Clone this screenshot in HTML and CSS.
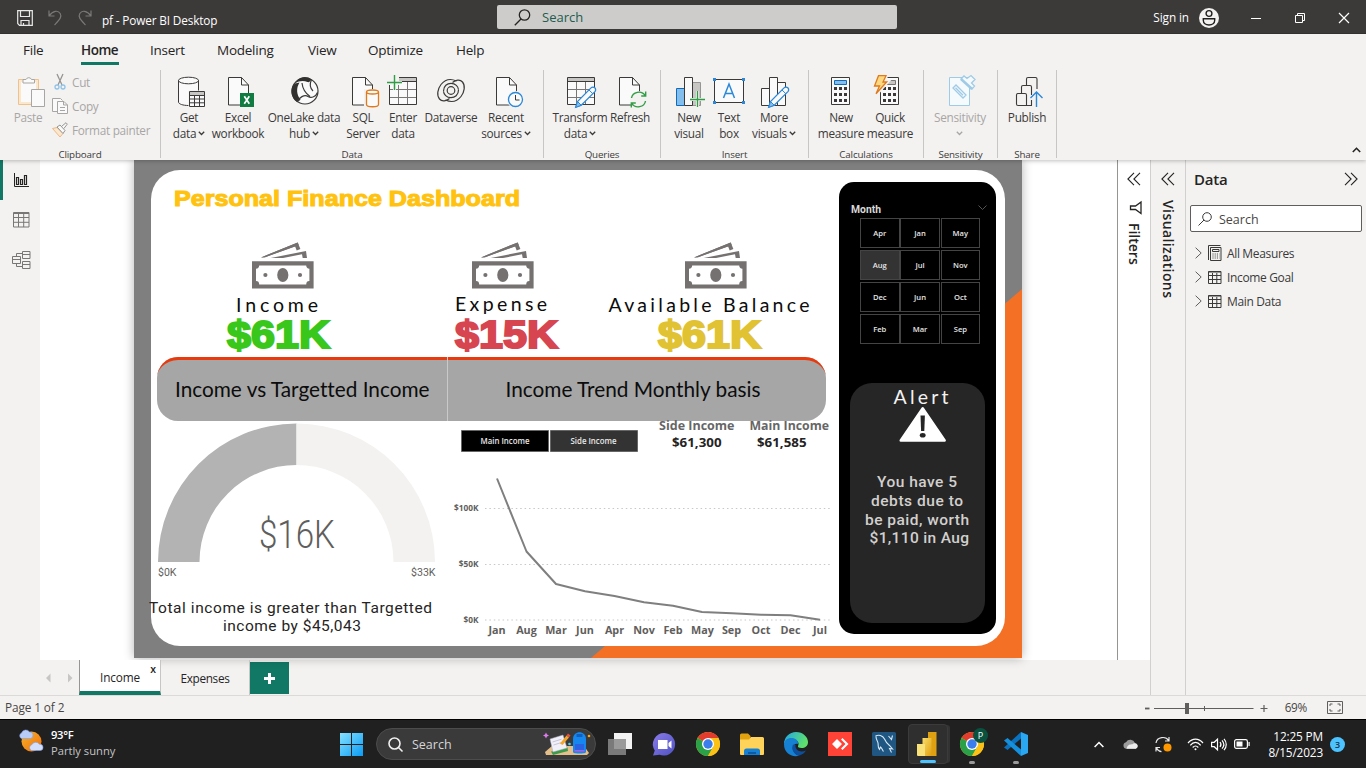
FILE: index.html
```html
<!DOCTYPE html>
<html lang="en">
<head>
<meta charset="utf-8">
<title>pf - Power BI Desktop</title>
<link rel="stylesheet" href="styles.css">
</head>
<body>
<svg class="defs" width="0" height="0" aria-hidden="true">
  <defs>
    <symbol id="page" viewBox="0 0 22 29" overflow="visible"><path d="M.5.5h13l7 7.500v20h-20z" fill="#fafafa" stroke="#3b3a39"/><path d="M13.500.5v7.500h7" fill="none" stroke="#3b3a39"/></symbol>
    <symbol id="calc" viewBox="0 0 19 29" overflow="visible"><path d="M.5.500h18v27h-18z" fill="#fafafa" stroke="#3b3a39"/><path d="M3 10h3v3H3zM8 10h3v3H8zM13 10h3v3h-3zM3 16h3v3H3zM8 16h3v3H8zM13 16h3v3h-3zM3 22h3v3H3zM8 22h3v3H8zM13 22h3v3h-3z" fill="#3b3a39"/></symbol>
    <symbol id="grid" viewBox="0 0 29 29" overflow="visible"><path d="M.5.500h27v27h-27z" fill="#fafafa"/><path d="M.5.5h27v4h-27z" fill="#c8c6c4"/><path d="M1 12.500h27M1 20.500h27M9.500 5v23M18.500 5v23" stroke="#797775" fill="none"/><path d="M.5.5h27v27h-27zM.5 4.500h27" stroke="#3b3a39" fill="none"/></symbol>
    <symbol id="pencil" viewBox="0 0 22 22" overflow="visible"><path d="M.7 21.300 2.500 15.500 16 1.900a2.600 2.600 0 0 1 3.900 3.700L6.300 19.300z" fill="#fafafa" stroke="#2b88d8" stroke-width="1.300"/><path d="M.7 21.300l1.800-5.800 3.800 3.800z" fill="#83beec" stroke="#2b88d8"/><path d="M14 4l3.800 3.700" stroke="#2b88d8"/></symbol>
    <symbol id="tbl" viewBox="0 0 14 13" overflow="visible"><path d="M.5.500h12.500v12H.5z" fill="none" stroke="#3b3a39"/><path d="M.5 1h12.500M.5 4.500h12.500M.5 8.500h12.500M4.500 2v10.500M8.800 2v10.500" stroke="#3b3a39"/></symbol>
    <symbol id="bill" viewBox="0 0 62 47" overflow="visible"><g fill="#767171"><path d="M9 15.400 45.700.4l2.700 6.600-3.700 1.400-1.600-4-30 10.800z"/><path d="M9 15.400 45.700.4l1 2.500L13 15.200z"/><path d="M18.700 16 54 9l1 7h-4.300l-.7-3.700L31 16z"/><path fill-rule="evenodd" d="M0 19.300h61.600v27.300H0zM7.200 23.500a3.300 3.300 0 0 1-3.200 3.200v12.400a3.300 3.300 0 0 1 3.200 3.300h47a3.300 3.300 0 0 1 3.200-3.300V26.700a3.300 3.300 0 0 1-3.200-3.200z"/><ellipse cx="30.800" cy="33" rx="5.600" ry="7"/><circle cx="13.400" cy="33" r="2.100"/><circle cx="48" cy="33" r="2.100"/></g></symbol>
    <symbol id="chrome" viewBox="0 0 24 24" overflow="visible"><circle cx="12" cy="12" r="12" fill="#fbc116"/><path d="M12 12 1.600 6A12 12 0 0 1 22.400 6z" fill="#e33b2e"/><path d="M12 12 1.600 6A12 12 0 0 0 12 24l5.200-9z" fill="#2aa148"/><path d="M12 6h10.400A12 12 0 0 1 12 24l5.200-9z" fill="#fbc116"/><circle cx="12" cy="12" r="6" fill="#fff"/><circle cx="12" cy="12" r="4.700" fill="#3b7ded"/></symbol>
    <symbol id="chev" viewBox="0 0 7 5" overflow="visible"><path d="M.8.8 3.500 3.500 6.200.8" fill="none" stroke="currentColor" stroke-width="1.300"/></symbol>
    <linearGradient id="gWin" x1="0" y1="0" x2="1" y2="1"><stop offset="0" stop-color="#86e2fd"/><stop offset="1" stop-color="#0a9bf5"/></linearGradient>
    <linearGradient id="gSun" x1="0" y1="0" x2="1" y2="1"><stop offset="0" stop-color="#f6b42a"/><stop offset="1" stop-color="#f06d0c"/></linearGradient>
    <linearGradient id="gEdge" x1="0" y1="0" x2="1" y2=".4"><stop offset="0" stop-color="#1fa6e8"/><stop offset="1" stop-color="#5fe06c"/></linearGradient>
    <linearGradient id="gChat" x1="0" y1="0" x2="1" y2="1"><stop offset="0" stop-color="#8a7be8"/><stop offset="1" stop-color="#4f52c4"/></linearGradient>
    <linearGradient id="gGold" x1="0" y1="0" x2="1" y2="1"><stop offset="0" stop-color="#f9dd6b"/><stop offset="1" stop-color="#e0a10f"/></linearGradient>
  </defs>
</svg>

<div class="app">
  <header class="titlebar">
    <div class="quick">
      <svg width="16" height="16" viewBox="0 0 16 16" fill="none" stroke="#e8e8e8" stroke-width="1.200"><path d="M.7.700h14.600v14.600H2.500L.7 13.500z"/><path d="M3.500 1v5.500h9V1M4 15v-4.500h8V15M6.500 15v-2"/></svg>
      <svg width="14" height="16" viewBox="0 0 14 16" fill="none" stroke="#7a7978" stroke-width="1.200"><path d="M1 .5v5.500h5.500M1.300 5.700C5 .5 10 0 12.200 3.500c2 3.500-.7 6-5.700 11.500"/></svg>
      <svg width="14" height="16" viewBox="0 0 14 16" fill="none" stroke="#7a7978" stroke-width="1.200"><path d="M13 .5v5.500H7.500M12.700 5.700C9 .5 4 0 1.800 3.500c-2 3.500.7 6 5.700 11.500"/></svg>
      <span class="doc">pf - Power BI Desktop</span>
    </div>
    <div class="topsearch">
      <svg width="17" height="17" viewBox="0 0 17 17" fill="none" stroke="#252423" stroke-width="1.300"><circle cx="10.500" cy="6" r="5.200"/><path d="M7 10 .8 16.200"/></svg>
      <span>Search</span>
    </div>
    <div class="account">
      <span>Sign in</span>
      <svg class="avatar" width="20" height="20" viewBox="0 0 20 20"><circle cx="10" cy="10" r="10" fill="#f3f2f1"/><g fill="none" stroke="#201f1e" stroke-width="1.400"><circle cx="10" cy="5.500" r="2.900"/><path d="M4.300 10.700h11.400v1.500c0 3-2.500 4.800-5.700 4.800s-5.700-1.800-5.700-4.800z"/></g></svg>
      <svg width="10" height="10" viewBox="0 0 10 10" stroke="#fff"><path d="M0 5.500h10"/></svg>
      <svg width="10" height="10" viewBox="0 0 10 10" fill="none" stroke="#fff"><path d="M.5 2.500h7v7h-7zM2.500 2.500v-2h7v7h-2"/></svg>
      <svg width="10" height="10" viewBox="0 0 10 10" stroke="#fff" stroke-width="1.200"><path d="M0 0l10 10M10 0 0 10"/></svg>
    </div>
  </header>

  <nav class="menu">
    <span class="m-file">File</span><span class="m-home">Home</span><span class="m-insert">Insert</span><span class="m-model">Modeling</span><span class="m-view">View</span><span class="m-opt">Optimize</span><span class="m-help">Help</span>
  </nav>

  <section class="ribbon">
    <div class="group g-clip">
      <div class="tools">
        <div class="btn off b56">
          <svg width="40" height="33" viewBox="0 0 40 33"><path d="M9.500 4.500h20v25h-20z" fill="#fbe7cb" stroke="#ecc38c"/><path d="M12 7h15v20H12z" fill="#fafafa"/><path d="M14 8V4.500h3a3 3 0 0 1 5.500 0h3V8z" fill="#fafafa" stroke="#a8a6a4"/><path d="M22.500 14.500h13v17h-13z" fill="#fafafa" stroke="#a8a6a4"/></svg>
          <span>Paste</span>
        </div>
        <div class="stack">
          <div class="mini"><svg width="16" height="16" viewBox="0 0 16 16" fill="none"><path d="M5 0l5 11M11 0 6 11" stroke="#979593" stroke-width="1.300"/><circle cx="5" cy="13" r="2" stroke="#8fc3e8" stroke-width="1.300"/><circle cx="11" cy="13" r="2" stroke="#8fc3e8" stroke-width="1.300"/></svg><span>Cut</span></div>
          <div class="mini"><svg width="16" height="16" viewBox="0 0 16 16" fill="#fafafa" stroke="#a8a6a4"><path d="M5 13.500H.5V.5h8l2 2"/><path d="M5.500 3.500h6.500l3.500 3.500v8.500h-10zM8 9.500h5M8 12.500h5M11.500 3.500V7h4"/></svg><span>Copy</span></div>
          <div class="mini"><svg width="16" height="16" viewBox="0 0 16 16"><path d="M.5 6.500 5 5.500l6 6-3 3.500z" fill="#fbe7cb" stroke="#ecb98a"/><path d="M5 5l3-2 5 5.500-2 3zM9.500 4.500 14 .700l1.300 1.400-3.500 4.500" fill="#fafafa" stroke="#979593"/></svg><span>Format painter</span></div>
        </div>
      </div>
      <div class="cap">Clipboard</div>
    </div>

    <div class="group g-data">
      <div class="tools">
        <div class="btn b44">
          <svg width="40" height="33" viewBox="0 0 40 33"><path d="M9.500 5v22c0 2 4.500 3.500 10 3.500s10-1.500 10-3.500V5" fill="#fafafa" stroke="#3b3a39"/><ellipse cx="19.500" cy="5.500" rx="10" ry="3.300" fill="#fafafa" stroke="#3b3a39"/><path d="M19.500 15.500h17v17h-17z" fill="#f3f2f1"/><path d="M20.500 16.500h15v15h-15z" fill="#fafafa" stroke="#3b3a39"/><path d="M21 17h14v3H21z" fill="#c8c6c4"/><path d="M20.500 20.500h15M20.500 24h15M20.500 27.800h15M25.500 20.500v11M30.500 20.500v11" stroke="#3b3a39" fill="none"/></svg>
          <span>Get<br>data<svg class="chev" width="7" height="5"><use href="#chev"/></svg></span>
        </div>
        <div class="btn b54">
          <svg width="40" height="33" viewBox="0 0 40 33"><use href="#page" x="10" y="2" width="22" height="29"/><path d="M22 18h14v14H22z" fill="#107c41"/><path d="M26.300 21.200l5 7.600M31.300 21.200l-5 7.600" stroke="#fff" stroke-width="1.700"/></svg>
          <span>Excel<br>workbook</span>
        </div>
        <div class="btn b78">
          <svg width="40" height="33" viewBox="0 0 40 33"><circle cx="21" cy="16" r="13" fill="#fafafa" stroke="#3b3a39" stroke-width="1.200"/><path d="M13 5.500C16 1.300 24 .7 27.500 4.500c-2 2.200-2 3-4 2.500-4-1.500-8.500-1.200-12.500 1.500z" fill="#323130"/><path d="M11 8.500C5.500 12 6.500 23 13 27c1.500-1 3-1.500 3.500-2.500C12.500 20 12 13 15.500 7.500z" fill="#323130"/><path d="M13 27c2-4.500 7.500-8 11-5.500 3.500 2 8 0 9.500-4M18 8c.5 5 3 10 8 13.500M27.500 4.500C25.500 9 26 13 29 16" fill="none" stroke="#3b3a39" stroke-width="1.200"/></svg>
          <span>OneLake data<br>hub<svg class="chev" width="7" height="5"><use href="#chev"/></svg></span>
        </div>
        <div class="btn b40">
          <svg width="40" height="33" viewBox="0 0 40 33"><use href="#page" x="9" y="2" width="22" height="29"/><path d="M21 14h17v19H21z" fill="#f3f2f1"/><path d="M23.500 17v12.500c0 3 12 3 12 0V17" fill="#fafafa" stroke="#e07a1c" stroke-width="1.300"/><ellipse cx="29.500" cy="17" rx="6" ry="2" fill="#fafafa" stroke="#e07a1c" stroke-width="1.300"/></svg>
          <span>SQL<br>Server</span>
        </div>
        <div class="btn b40">
          <svg width="40" height="33" viewBox="0 0 40 33"><use href="#grid" x="6" y="2" width="29" height="29"/><path d="M3 0h13v10H3z" fill="#f3f2f1"/><path d="M11.500 0v15M4 7.500h15" stroke="#f3f2f1" stroke-width="3"/><path d="M11.500 0v15M4 7.500h15" stroke="#2f9e44" stroke-width="1.400"/></svg>
          <span>Enter<br>data</span>
        </div>
        <div class="btn b56">
          <svg width="40" height="33" viewBox="0 0 40 33" fill="none" stroke="#3b3a39" stroke-width="1.200"><g id="lobe"><path d="M25.500 6C20 3.500 14 4.500 10 9.500c-3.500 4.500-4.500 11-1.500 14.500 2.500 3 7 2 10-.5"/><path d="M12.500 16c0-5 3.700-7.700 7.500-7.700 4.500 0 7.300 3.200 7.500 6.500"/></g><g transform="rotate(180 20 15.500)"><path d="M25.500 6C20 3.500 14 4.500 10 9.500c-3.500 4.500-4.500 11-1.500 14.500 2.500 3 7 2 10-.5"/><path d="M12.500 16c0-5 3.700-7.700 7.500-7.700 4.500 0 7.300 3.200 7.500 6.500"/></g><circle cx="20" cy="15.500" r="3.800"/></svg>
          <span>Dataverse</span>
        </div>
        <div class="btn b54">
          <svg width="40" height="33" viewBox="0 0 40 33"><use href="#page" x="10" y="2" width="22" height="29"/><circle cx="29.500" cy="24.500" r="8.500" fill="#f3f2f1"/><circle cx="29.500" cy="24.500" r="7" fill="#fafafa" stroke="#2b88d8" stroke-width="1.300"/><path d="M29.500 20v5h4" fill="none" stroke="#3b3a39"/></svg>
          <span>Recent<br>sources<svg class="chev" width="7" height="5"><use href="#chev"/></svg></span>
        </div>
      </div>
      <div class="cap">Data</div>
    </div>

    <div class="group g-query">
      <div class="tools">
        <div class="btn b54">
          <svg width="40" height="33" viewBox="0 0 40 33"><use href="#grid" x="7" y="2" width="29" height="29"/><use href="#pencil" x="15" y="11" width="22" height="22"/></svg>
          <span>Transform<br>data<svg class="chev" width="7" height="5"><use href="#chev"/></svg></span>
        </div>
        <div class="btn b46">
          <svg width="40" height="33" viewBox="0 0 40 33"><use href="#page" x="9" y="2" width="22" height="29"/><circle cx="28.500" cy="24.500" r="8.500" fill="#f3f2f1"/><path d="M21.500 23c1-6 10-8.500 14-2M35.500 26c-1 6-10 8.500-14 2M35.700 16.500V21h-4.500M21.300 32.500V28h4.500" fill="none" stroke="#2f9e44" stroke-width="1.400"/></svg>
          <span>Refresh</span>
        </div>
      </div>
      <div class="cap">Queries</div>
    </div>

    <div class="group g-insert">
      <div class="tools">
        <div class="btn b40">
          <svg width="40" height="33" viewBox="0 0 40 33"><path d="M7.500 13.500h8v17h-8z" fill="#83beec" stroke="#0f6cbd"/><path d="M23.500 7.500h8v23h-8z" fill="#c8c6c4" stroke="#979593"/><path d="M15.500 2.500h8v28h-8z" fill="#fafafa" stroke="#3b3a39"/><path d="M28.500 16v16M21 24.500h15" stroke="#f3f2f1" stroke-width="3"/><path d="M28.500 16v16M21 24.500h15" stroke="#2f9e44" stroke-width="1.300"/></svg>
          <span>New<br>visual</span>
        </div>
        <div class="btn b40">
          <svg width="40" height="33" viewBox="0 0 40 33"><path d="M5.500 4.500h29v23h-29z" fill="#fafafa" stroke="#3b3a39"/><path d="M4 3h3v3H4zM33 3h3v3h-3zM4 26h3v3H4zM33 26h3v3h-3z" fill="#2b88d8"/><path d="M14.500 23l5.500-14 5.500 14M16.300 18.500h7.400" fill="none" stroke="#2b88d8" stroke-width="1.500"/></svg>
          <span>Text<br>box</span>
        </div>
        <div class="btn b50">
          <svg width="40" height="33" viewBox="0 0 40 33"><path d="M7.500 13.500h8v17h-8zM23.500 7.500h8v23h-8zM15.500 2.500h8v28h-8z" fill="#fafafa" stroke="#3b3a39"/><use href="#pencil" x="14" y="11" width="22" height="22"/></svg>
          <span>More<br>visuals<svg class="chev" width="7" height="5"><use href="#chev"/></svg></span>
        </div>
      </div>
      <div class="cap">Insert</div>
    </div>

    <div class="group g-calc">
      <div class="tools">
        <div class="btn b50">
          <svg width="40" height="33" viewBox="0 0 40 33"><use href="#calc" x="10" y="2" width="19" height="29"/><path d="M13.500 5.500h12v4h-12z" fill="#83beec" stroke="#0f6cbd"/></svg>
          <span>New<br>measure</span>
        </div>
        <div class="btn b48">
          <svg width="40" height="33" viewBox="0 0 40 33"><use href="#calc" x="10" y="2" width="19" height="29"/><path d="M13.500 5.500h12v4h-12z" fill="#c8c6c4" stroke="#797775"/><path d="M8 0h9l-3 6.500h4L5.500 20.500 9 11.500H3.500z" fill="#fbdc8b" stroke="#f3f2f1" stroke-width="3"/><path d="M8.500.700h7.500L13 7h3.700L6 18.800 9.500 11H4.500z" fill="#fbd982" stroke="#e07a1c" stroke-width="1.300"/></svg>
          <span>Quick<br>measure</span>
        </div>
      </div>
      <div class="cap">Calculations</div>
    </div>

    <div class="group g-sens">
      <div class="tools">
        <div class="btn off b72">
          <svg width="40" height="33" viewBox="0 0 40 33" stroke="#9fcbe6" fill="#f5fafd"><path d="M9.500 2.500h20v28h-20z"/><path d="M13 13l3-3 10 10-3 3zM15.500 12.700l7.500 7.500M21 4l3-3 3 2.500L31 .500l4 4-3.500 3.500 3 3-2.500 3z" stroke-width="1.300"/><path d="M21 4l11 10" stroke-width="2.500"/></svg>
          <span>Sensitivity<br><svg class="chev solo" width="7" height="5"><use href="#chev"/></svg></span>
        </div>
      </div>
      <div class="cap">Sensitivity</div>
    </div>

    <div class="group g-share">
      <div class="tools">
        <div class="btn b58">
          <svg width="40" height="33" viewBox="0 0 40 33" fill="none"><path d="M25 30.500H11a1.500 1.500 0 0 1-1.500-1.500V20a1.500 1.500 0 0 1 1.500-1.500h7a1.500 1.500 0 0 1 1.500 1.500v10.500M14.500 18v-6a1.500 1.500 0 0 1 1.500-1.500h7a1.500 1.500 0 0 1 1.500 1.500v8M24.500 25v5.500M19.500 10V4A1.500 1.500 0 0 1 21 2.500h7.500A1.500 1.500 0 0 1 30 4v10" stroke="#3b3a39" stroke-width="1.100"/><path d="M29.500 32V17M23.500 23l6-6 6 6" stroke="#2b88d8" stroke-width="1.400"/></svg>
          <span>Publish</span>
        </div>
      </div>
      <div class="cap">Share</div>
    </div>
    <svg class="collapse" width="9" height="6" viewBox="0 0 9 6"><path d="M.8 5 4.500 1.300 8.200 5" fill="none" stroke="#252423" stroke-width="1.600"/></svg>
  </section>

  <main class="work">
    <div class="left">
      <div class="stage">
        <aside class="rail">
          <div class="view on"><svg width="15" height="15" viewBox="0 0 15 15" fill="none" stroke="#252423"><path d="M.5 0v13.500H15" /><path d="M2.500 4.500h2v7h-2zM6.500 6.500h2v5h-2zM10.500 2.500h2v9h-2z" stroke-width="1.200"/></svg></div>
          <div class="view"><svg width="17" height="16" viewBox="0 0 17 16" fill="none" stroke="#797775"><path d="M.5.500h15.500v14.500H.5zM.5 1.500h15.500M.5 5.500h15.500M.5 10.300h15.500M5.500 1v14M10.700 1v14"/></svg></div>
          <div class="view"><svg width="19" height="18" viewBox="0 0 19 18" fill="none" stroke="#797775"><path d="M.5 5.500h8v7h-8zM10.500.5h7.500v7h-7.500zM10.500 10.500h7.500v7h-7.500zM.5 8.500h8M10.500 3.500h7.500M10.500 13.500h7.500M4.500 5.500v-3h6M4.500 12.500v3h6"/></svg></div>
        </aside>

        <div class="canvas">
          <div class="report">
            <div class="card">
              <div class="board">
                <svg class="title" width="688" height="70" viewBox="0 0 688 70"><text x="23" y="35.500" textLength="346" lengthAdjust="spacingAndGlyphs" class="black gold">Personal Finance Dashboard</text></svg>
                <div class="kpis">
                  <svg width="254" height="117" viewBox="0 0 254 117"><use href="#bill" x="101" y="2" width="62" height="47"/><text x="85" y="72" textLength="82" class="kname">Income</text><text x="76" y="108" textLength="103" lengthAdjust="spacingAndGlyphs" class="kval green">$61K</text></svg>
                  <svg width="192" height="117" viewBox="0 0 192 117"><use href="#bill" x="67" y="2" width="62" height="47"/><text x="50" y="71" textLength="92" class="kname">Expense</text><text x="50" y="108" textLength="103" lengthAdjust="spacingAndGlyphs" class="kval red">$15K</text></svg>
                  <svg width="226" height="117" viewBox="0 0 226 117"><use href="#bill" x="88" y="2" width="62" height="47"/><text x="11.500" y="72" textLength="201" class="kname">Available Balance</text><text x="61" y="108" textLength="103" lengthAdjust="spacingAndGlyphs" class="kval yellow">$61K</text></svg>
                </div>
                <div class="banner">
                  <svg class="bl" width="290" height="64" viewBox="0 0 290 64"><text x="18" y="39.500" textLength="254.500" lengthAdjust="spacingAndGlyphs">Income vs Targetted Income</text></svg>
                  <svg width="378" height="64" viewBox="0 0 378 64"><text x="57.500" y="39.500" textLength="255" lengthAdjust="spacingAndGlyphs">Income Trend Monthly basis</text></svg>
                </div>
                <div class="visuals">
                  <svg width="296" height="225" viewBox="151 421 296 225">
                    <path d="M158 562A138.500 138.500 0 0 1 296.500 423.500V465A97 97 0 0 0 199.500 562z" fill="#b3b3b3"/>
                    <path d="M296.500 423.500A138.500 138.500 0 0 1 435 562H393.500A97 97 0 0 0 296.500 465z" fill="#f3f2f1"/>
                    <text x="259" y="548" textLength="76" lengthAdjust="spacingAndGlyphs" class="din big">$16K</text>
                    <text x="158" y="576" textLength="18.500" lengthAdjust="spacingAndGlyphs" class="din tick">$0K</text>
                    <text x="411" y="576" textLength="24.500" lengthAdjust="spacingAndGlyphs" class="din tick">$33K</text>
                    <text x="149" y="613" textLength="283" class="din note">Total income is greater than Targetted</text>
                    <text x="223" y="631" textLength="138" class="din note">income by $45,043</text>
                  </svg>
                  <svg width="392" height="225" viewBox="447 421 392 225">
                    <path d="M461.500 430.500h87v21h-87z" fill="#000" stroke="#666"/><path d="M550.500 430.500h87v21h-87z" fill="#333" stroke="#666"/>
                    <g class="chip"><text x="480.500" y="444" textLength="49" lengthAdjust="spacingAndGlyphs">Main Income</text><text x="570.500" y="444" textLength="46" lengthAdjust="spacingAndGlyphs">Side Income</text></g>
                    <g class="sumname"><text x="659" y="430" textLength="75.500" lengthAdjust="spacingAndGlyphs">Side Income</text><text x="749.500" y="430" textLength="79.500" lengthAdjust="spacingAndGlyphs">Main Income</text></g>
                    <g class="sumval"><text x="672" y="447" textLength="49.500" lengthAdjust="spacingAndGlyphs">$61,300</text><text x="757" y="447" textLength="49.500" lengthAdjust="spacingAndGlyphs">$61,585</text></g>
                    <path d="M485 508.500h346M485 564.500h346M485 620h346" stroke="#c8c8c8" stroke-dasharray="1.500 2.900"/>
                    <g class="axis small"><text x="478.500" y="511.300">$100K</text><text x="478.500" y="567.300">$50K</text><text x="478.500" y="623.300">$0K</text></g>
                    <g class="axis"><text x="497" y="634">Jan</text><text x="526.500" y="634">Aug</text><text x="556" y="634">Mar</text><text x="585" y="634">Jun</text><text x="614.500" y="634">Apr</text><text x="644" y="634">Nov</text><text x="673" y="634">Feb</text><text x="702.500" y="634">May</text><text x="731.500" y="634">Sep</text><text x="761" y="634">Oct</text><text x="790.500" y="634">Dec</text><text x="820" y="634">Jul</text></g>
                    <path d="M497 478.500 526.500 551.500 556 584 585 591.300 614.500 596 644 602.300 673 605.800 702 612 732 613.200 761 614.800 790.500 615.300 820 619.700" fill="none" stroke="#7f7f7f" stroke-width="2" stroke-linejoin="round"/>
                  </svg>
                </div>
              </div>

              <div class="side">
                <div class="slicer-head"><svg width="156" height="36" viewBox="839 182 156 36"><text x="851" y="213" textLength="30" lengthAdjust="spacingAndGlyphs" class="month">Month</text><path d="M978.500 205.500l4 4 4-4" fill="none" stroke="#555"/></svg></div>
                <div class="months">
                  <span>Apr</span><span>Jan</span><span>May</span>
                  <span class="sel">Aug</span><span>Jul</span><span>Nov</span>
                  <span>Dec</span><span>Jun</span><span>Oct</span>
                  <span>Feb</span><span>Mar</span><span>Sep</span>
                </div>
                <div class="alert">
                  <svg width="135" height="240" viewBox="850 383 135 240">
                    <text x="893.500" y="403.500" textLength="55" class="ahead">Alert</text>
                    <path d="M922.700 408.200l22 32.300h-44z" fill="#fff" stroke="#fff" stroke-width="2.400" stroke-linejoin="round"/>
                    <path d="M920.500 415.500h4.400l-.6 15.500h-3.200z" fill="#262626"/><ellipse cx="922.700" cy="435.300" rx="2.900" ry="2.300" fill="#262626"/>
                    <g class="din amsg"><text x="877" y="487" textLength="80">You have 5</text><text x="871" y="506" textLength="92">debts due to</text><text x="865" y="525" textLength="104">be paid, worth</text><text x="869.500" y="543" textLength="99.500">$1,110 in Aug</text></g>
                  </svg>
                </div>
              </div>
            </div>
          </div>
        </div>

        <aside class="filters">
          <svg width="14" height="14" viewBox="0 0 14 14" fill="none" stroke="#252423" stroke-width="1.100"><path d="M7 .8.900 7 7 13.200M13 .8 6.900 7l6.100 6.200"/></svg>
          <svg class="funnel" width="13" height="14" viewBox="0 0 13 14" fill="none" stroke="#252423" stroke-width="1.300"><path d="M12 1v11.500L6.500 8.500h-5V5h5z"/></svg>
          <span class="vert v1">Filters</span>
        </aside>
      </div>
      <div class="tabs">
        <svg class="arrows" width="79" height="35" viewBox="0 0 79 35" fill="#c8c6c4"><path d="M50.500 13.500v9L46 18zM68 13.500v9l4.500-4.500z"/></svg>
        <div class="tab on"><span>Income</span><i>x</i></div>
        <div class="tab"><span>Expenses</span></div>
        <div class="add"><svg width="11" height="11" viewBox="0 0 11 11"><path d="M5.500 0v11M0 5.500h11" stroke="#fff" stroke-width="3"/></svg></div>
      </div>
    </div>
    <aside class="viz">
      <svg width="14" height="14" viewBox="0 0 14 14" fill="none" stroke="#252423" stroke-width="1.100"><path d="M7 .8.900 7 7 13.200M13 .8 6.900 7l6.100 6.200"/></svg>
      <span class="vert v2">Visualizations</span>
    </aside>
    <aside class="data">
      <div class="dhead"><h2>Data</h2><svg width="14" height="14" viewBox="0 0 14 14" fill="none" stroke="#252423" stroke-width="1.100"><path d="M1 .8 7.100 7 1 13.200M7 .8l6.100 6.200L7 13.200"/></svg></div>
      <div class="dsearch"><svg width="14" height="14" viewBox="0 0 14 14" fill="none" stroke="#3b3a39"><circle cx="9" cy="5" r="4.300"/><path d="M6 8 .5 13.500"/></svg><span>Search</span></div>
      <div class="drow"><svg class="tw" width="7" height="12" viewBox="0 0 7 12" fill="none" stroke="#605e5c"><path d="M.6.700 6.200 6 .6 11.300"/></svg><svg width="14" height="16" viewBox="0 0 14 16" fill="none" stroke="#3b3a39"><path d="M.5 15V.5h12"/><path d="M2.500 2.500h10.500v13H2.500zM4.500 4.500h6.500v2H4.500z"/><path d="M4.500 9h7M4.500 11h7M4.500 13h7" stroke-dasharray="1 1.200"/></svg><span>All Measures</span></div>
      <div class="drow"><svg class="tw" width="7" height="12" viewBox="0 0 7 12" fill="none" stroke="#605e5c"><path d="M.6.700 6.200 6 .6 11.300"/></svg><svg width="14" height="13"><use href="#tbl" width="14" height="13"/></svg><span>Income Goal</span></div>
      <div class="drow"><svg class="tw" width="7" height="12" viewBox="0 0 7 12" fill="none" stroke="#605e5c"><path d="M.6.700 6.200 6 .6 11.300"/></svg><svg width="14" height="13"><use href="#tbl" width="14" height="13"/></svg><span>Main Data</span></div>
    </aside>
  </main>

  <footer class="status">
    <span class="pg">Page 1 of 2</span>
    <svg width="126" height="12" viewBox="1143 702 126 12"><path d="M1145 708.500h4.500" stroke="#605e5c" stroke-width="1.800"/><path d="M1154 708.500h99.500M1204.500 706v5" stroke="#605e5c"/><path d="M1185 703h4v11h-4z" fill="#605e5c"/><path d="M1260.500 708.500h7M1264 705v7" stroke="#605e5c" stroke-width="1.200"/></svg>
    <span class="pct">69%</span>
    <svg width="16" height="13" viewBox="0 0 16 13" fill="none" stroke="#605e5c"><path d="M.5.500h15v12H.5z"/><path d="M3 5V3h2.500M10.500 3H13v2M13 8v2h-2.500M5.500 10H3V8"/></svg>
  </footer>

  <footer class="taskbar">
    <div class="weather">
      <svg width="26" height="24" viewBox="0 0 26 24"><circle cx="13.500" cy="12.500" r="10" fill="url(#gSun)"/><path d="M3.500 9.500a3 3 0 0 1 0-5.500A4.500 4.500 0 0 1 11.500 3a3.300 3.300 0 0 1 1 6.500z" fill="#b9ccf7" stroke="#7f9ee0" stroke-width=".6"/><path d="M13.500 21.500a3 3 0 0 1 .2-5.700 4.500 4.500 0 0 1 7.800-.5 3.100 3.100 0 0 1 .8 6.200z" fill="#d3dffb" stroke="#7f9ee0" stroke-width=".6"/></svg>
      <div><b>93°F</b><span>Partly sunny</span></div>
    </div>
    <div class="slot"><svg class="win" width="23" height="23" viewBox="0 0 23 23" fill="url(#gWin)"><path d="M0 0h11v11H0zM12 0h11v11H12zM0 12h11v11H0zM12 12h11v11H12z"/></svg></div>
    <div class="pill">
      <svg width="15" height="15" viewBox="0 0 15 15" fill="none" stroke="#f0f0f0" stroke-width="1.600"><circle cx="6.500" cy="6.500" r="5.500"/><path d="M10.500 10.500l4 4"/></svg>
      <span>Search</span>
      <svg class="art" width="48" height="26" viewBox="0 0 48 26"><path d="M2 21l7-6h32l5 7-2 2H3z" fill="#e5bf8a"/><path d="M8 20.500l2 3.500 15-4-.5-3.500-14 3.500z" fill="#3c9b4a"/><path d="M7 8l13-4 4 13-14 4z" fill="#f1eff7" stroke="#a9a6bd" stroke-width=".5"/><path d="M9.500 11l9-2.800M10.500 14l9-2.800" stroke="#bdb8cf" stroke-width=".8"/><path d="M17 12.500l6.500-8 2.500 2-6.500 7.500z" fill="#f4a62a"/><path d="M23.500 4.500l1.500-2 2.500 2-1.500 2z" fill="#e94f3f"/><path d="M30 8c0-9 13-9 13 0v13c0 2-13 2-13 0z" fill="#1687ef"/><path d="M32 13h9v6h-9z" fill="#2a62e2"/><path d="M33.500 3h6v3h-6z" fill="#0e5fc0"/><path d="M31.500 19h10v1.500h-10z" fill="#aa5de2"/><path d="M3 1.500l1 2 2 1-2 1-1 2-1-2-2-1 2-1z" fill="#df7df0"/><circle cx="46" cy="5" r="1.300" fill="#f7a61b"/><circle cx="26.500" cy="13" r="1.300" fill="#4bd1e8"/></svg>
    </div>
    <div class="slot"><svg width="24" height="22" viewBox="0 0 24 22"><path d="M6 0h18v16H6z" fill="#f2f2f2"/><path d="M0 6h18v16H0z" fill="#8b8b8b" opacity=".85"/></svg></div>
    <div class="slot"><svg width="23" height="23" viewBox="0 0 23 23"><path d="M11.500 0a11.300 11.300 0 1 1-4.800 21.800L0 22.500l1.800-5A11.300 11.300 0 0 1 11.500 0z" fill="url(#gChat)"/><path d="M5 7h9.500v9H5zM15.500 10l3-2.500v8l-3-2.500z" fill="#fff"/></svg></div>
    <div class="slot"><svg width="24" height="24"><use href="#chrome" width="24" height="24"/></svg></div>
    <div class="slot"><svg width="24" height="23" viewBox="0 0 24 23"><path d="M0 2a1.500 1.500 0 0 1 1.500-1.500H8l2.500 2.500v4H0z" fill="#e2a210"/><path d="M0 6.500h9l2-2.500h11.500A1.500 1.500 0 0 1 24 5.500V21a1 1 0 0 1-1 1H1a1 1 0 0 1-1-1z" fill="#ffd35a"/><path d="M4 22v-4a2.500 2.500 0 0 1 2.500-2.500h11A2.500 2.500 0 0 1 20 18v4z" fill="#1580d4"/><path d="M8 19h8v2H8z" fill="#0a5ba5"/></svg></div>
    <div class="slot"><svg width="24" height="24" viewBox="0 0 24 24"><path d="M0 12A12 12 0 0 1 12 0c7 0 12 5 12 10 0 4-3 6-6.500 6-2.500 0-4-.8-3.500-2 1.500-2.500 0-6-4-6C5 8 1 10 0 12z" fill="url(#gEdge)"/><path d="M0 12.500C0 8 4 5.500 8.500 6c3.500.3 6 3 5.500 6-4-1.500-6.500 3-4.500 7 1.200 2.600 3.500 4.500 6 4.500C8 26 0 21 0 12.500z" fill="#1680d2"/><path d="M9 12.500C7 17 9.500 22.500 15 23.600c3-.6 5.500-2.600 7-5-5.500 2.500-11 0-10.500-5.500z" fill="#0c4f9e"/></svg></div>
    <div class="slot"><svg width="24" height="24" viewBox="0 0 24 24"><path d="M0 0h24v24H0z" fill="#ff4336"/><path d="M9 7l5 5-5 5-5-5zM13 7.500l1.500-1.500 6 6-6 6-1.500-1.500 4.500-4.500z" fill="#fff"/></svg></div>
    <div class="slot"><svg width="24" height="24" viewBox="0 0 24 24"><path d="M1.500 0h21A1.500 1.500 0 0 1 24 1.500v21a1.500 1.500 0 0 1-1.500 1.500h-21A1.500 1.500 0 0 1 0 22.500v-21A1.500 1.500 0 0 1 1.500 0z" fill="#1f5682"/><path d="M3.500 4c3-1.500 7-1 9 3 1.500 3.500 3 5 5 6.500l3 3.500-3-.5 2 4M4 4.500c0 3 1.500 4 2 6.500s-.5 4 1.500 6.500l1-2.500c1.500 1 2 3 3 4.500M16.500 4l3 3.500 1-4" fill="none" stroke="#d7e8f3" stroke-width="1.100"/></svg></div>
    <div class="slot active"><svg width="21" height="24" viewBox="0 0 21 24"><path d="M11 0h8.500v24H11z" fill="#dfa012"/><path d="M5.500 6h9v18h-9z" fill="url(#gGold)"/><path d="M0 12h8v12H1a1 1 0 0 1-1-1z" fill="#fae27a"/></svg><i></i></div>
    <div class="slot run"><svg width="30" height="28" viewBox="0 0 30 28" class="cp"><use href="#chrome" x="1" y="4" width="24" height="24"/><circle cx="21.500" cy="7.500" r="7.500" fill="#0a5240"/><text x="21.500" y="10.500" class="p">P</text></svg><i></i></div>
    <div class="slot run"><svg width="24" height="24" viewBox="0 0 24 24"><path d="M17 0l7 3v18l-7 3z" fill="#2aa7f0"/><path d="M17 0v6.500L3.500 18 0 15.500z" fill="#0a72bf"/><path d="M17 24v-6.500L3.500 6 0 8.500z" fill="#1590dc"/></svg><i></i></div>

    <div class="tray">
      <svg width="10" height="7" viewBox="0 0 10 7" fill="none" stroke="#fff" stroke-width="1.500"><path d="M.6 6 5 1.500 9.400 6"/></svg>
      <svg width="16" height="10" viewBox="0 0 16 10"><path d="M3.500 9.700a3.300 3.300 0 0 1-.5-6.500A5 5 0 0 1 12 4a3 3 0 0 1 .8 5.700z" fill="#9b9b9b"/><path d="M3.500 9.700c1-4 3.500-4.500 6-4.500 1-1 2.500-1.200 4-.2a2.600 2.600 0 0 1-.7 4.700z" fill="#ececec"/></svg>
      <svg width="17" height="17" viewBox="0 0 17 17" fill="none" stroke="#e8e8e8" stroke-width="1.200"><path d="M1 7C2 .5 11 0 13.500 4.500M14 1v4h-4M1 15.500v-4h4M1.500 12c1 2 3 3.500 5 3.700"/><circle cx="12.500" cy="11.500" r="4" fill="#ff9800" stroke="none"/></svg>
    </div>
    <div class="net">
      <svg width="17" height="13" viewBox="0 0 17 13" fill="none" stroke="#fff" stroke-width="1.200"><path d="M1 5c4.500-5.300 10.500-5.300 15 0M3.300 7.300c3.200-3.800 7.200-3.800 10.400 0M5.700 9.500c1.800-2 3.800-2 5.600 0"/><circle cx="8.500" cy="11.200" r="1" fill="#fff" stroke="none"/></svg>
      <svg width="16" height="13" viewBox="0 0 16 13" fill="none" stroke="#fff" stroke-width="1.200"><path d="M.6 4.300h2.600L6.500 1.200v10.600L3.200 8.700H.6zM9 4c1.200 1.500 1.200 3.500 0 5M11 2.300c2.200 2.500 2.200 5.900 0 8.400M13 .8c3 3.300 3 8 0 11.400"/></svg>
      <svg width="16" height="10" viewBox="0 0 16 10"><rect x=".6" y=".6" width="12.800" height="8.800" rx="1.800" fill="none" stroke="#fff" stroke-width="1.200"/><path d="M2.500 2.500h6v5h-6zM14.500 3h1.200v4h-1.200z" fill="#fff"/></svg>
    </div>
    <div class="clock"><span>12:25 PM</span><span>8/15/2023</span></div>
    <div class="badge">3</div>
  </footer>
</div>
</body>
</html>
```

FILE: styles.css
```css
* { box-sizing: border-box; }
body { margin: 0; width: 1366px; height: 768px; overflow: hidden; font-family: "Open Sans", "Noto Sans", sans-serif; color: #252423; }
svg { display: block; flex: none; overflow: visible; }
.defs { position: absolute; }
.app { display: flex; flex-direction: column; width: 1366px; height: 768px; background: #f3f2f1; }

/* title bar */
.titlebar { display: flex; height: 34px; background: #3b3a39; color: #fff; border-bottom: 1px solid #323130; }
.quick { display: flex; align-items: center; width: 497px; padding-left: 17px; gap: 15px; height: 36px; }
.quick svg:nth-of-type(3) { margin-left: 1px; }
.doc { font-size: 11.800px; letter-spacing: -.15px; margin: 4px 0 0 -5px; }
.topsearch { display: flex; align-items: center; width: 400px; height: 24px; margin-top: 5px; padding-left: 17px; gap: 11px; background: #cdcccb; border-radius: 2px; color: #215c4e; font-size: 13px; }
.account { display: flex; align-items: center; margin-left: auto; padding-right: 17px; height: 35px; font-size: 11.800px; letter-spacing: -.1px; }
.account > span { margin-bottom: 1px; }
.account .avatar { margin: 0 32px 0 10px; }
.account svg:nth-of-type(n+3) { margin-left: 34px; }

/* menu */
.menu { display: flex; height: 36px; font-size: 13.500px; letter-spacing: -.25px; line-height: 32px; }
.menu span { flex: none; white-space: nowrap; }
.m-file { padding-left: 23px; width: 81px; }
.m-home { width: 38px; height: 31px; margin-right: 31px; font-weight: 600; border-bottom: 3px solid #117865; letter-spacing: -.5px; }
.m-insert { width: 67px; }
.m-model { width: 91px; }
.m-view { width: 60px; }
.m-opt { width: 88px; }

/* ribbon */
.ribbon { position: relative; display: flex; height: 90px; color: #3b3a39; font-size: 11.800px; letter-spacing: -.3px; box-shadow: 0 1px 4px rgba(0,0,0,.25); clip-path: inset(0 0 -6px 0); z-index: 2; background: #f3f2f1; }
.group { display: flex; flex-direction: column; height: 88px; border-right: 1px solid #c8c6c4; }
.tools { display: flex; height: 78px; flex: none; padding-top: 5px; }
.cap { font-size: 9.800px; line-height: 13px; margin-top: -1px; padding-top: 1px; text-align: center; letter-spacing: -.15px; }
.btn { display: flex; flex-direction: column; align-items: center; text-align: center; line-height: 16px; white-space: nowrap; }
.btn > span { margin-top: 1px; }
.off, .mini { color: #a8a6a4; }
.chev { display: inline-block; margin: 0 0 2px 2px; }
.chev.solo { margin-left: 0; }
.b40 { width: 40px; } .b44 { width: 44px; } .b46 { width: 46px; } .b48 { width: 48px; } .b50 { width: 50px; }
.b54 { width: 54px; } .b56 { width: 56px; } .b58 { width: 58px; } .b72 { width: 72px; } .b78 { width: 78px; }
.g-clip { width: 161px; }
.g-clip .b56 { width: 52px; align-items: center; }
.g-clip .btn > svg { margin-left: 5px; }
.g-clip .btn > span { margin-left: 4px; }
.stack { display: flex; flex-direction: column; gap: 8px; margin-top: -1px; }
.mini { display: flex; align-items: center; gap: 4px; height: 16px; white-space: nowrap; }
.g-data { width: 383px; } .g-data .tools { padding-left: 6px; }
.g-query { width: 117px; } .g-query .tools { padding-left: 9px; }
.g-insert { width: 148px; } .g-insert .tools { padding-left: 8px; }
.g-calc { width: 115px; } .g-calc .tools { padding-left: 7px; }
.g-sens { width: 74px; }
.g-share { width: 59px; }
.collapse { margin: 77px 5px 0 auto; }

/* workspace */
.work { display: flex; height: 535px; }
.left { width: 1150px; }
.stage { display: flex; height: 500px; background: #fff; }
.rail { width: 40px; background: #f3f2f1; }
.view { display: flex; align-items: center; justify-content: center; height: 40px; border-left: 3px solid transparent; padding-right: 1px; }
.view.on { border-color: #117865; }
.canvas { width: 1077px; padding-left: 94px; }
.report { position: relative; width: 888px; height: 498px; padding: 10px 17px; background: #7f7f7f; box-shadow: 0 0 10px rgba(0,0,0,.3); }
.report::before { content: ""; position: absolute; inset: 0; background: #f37024; clip-path: polygon(888px 129px, 888px 498px, 457px 498px); }
.card { position: relative; display: flex; width: 854px; height: 476px; background: #fff; border-radius: 29px; }
.board { width: 688px; }
.kpis { display: flex; }
.banner { display: flex; width: 669px; height: 64px; margin-left: 6px; border-radius: 21px; background: #a6a6a6; box-shadow: inset 0 4.500px 0 -1.500px #e93a0e; }
.banner .bl { border-right: 1px solid #c9c9c9; width: 291px; }
.banner text { font: 20.500px Lato, sans-serif; font-variant-ligatures: none; fill: #0c0c0c; }
.visuals { display: flex; }
.black, .kval { font-family: "Liberation Sans", Arial, sans-serif; font-weight: 700; }
.black { font-size: 21.500px; stroke-width: 1px; }
.gold { fill: #ffc20e; stroke: #ffc20e; }
.kval { font-size: 38px; stroke-width: 2px; }
.green { fill: #3ac71c; stroke: #3ac71c; } .red { fill: #d64550; stroke: #d64550; } .yellow { fill: #e1c233; stroke: #e1c233; }
.kname { font: 19.500px Lato, sans-serif; fill: #0c0c0c; }
.din { font-family: Roboto, sans-serif; }
.big { font-size: 38px; font-weight: 300; fill: #605e5c; }
.tick { font-size: 11.500px; fill: #605e5c; }
.note { font-size: 15.500px; fill: #252423; }
.chip { font-size: 8px; font-weight: 600; fill: #e8e8e8; }
.sumname { font-size: 12.800px; font-weight: 700; fill: #666; }
.sumval { font-size: 13px; font-weight: 700; fill: #252423; }
.axis { font-size: 10.800px; font-weight: 700; fill: #605e5c; text-anchor: middle; }
.axis.small { font-size: 8.300px; text-anchor: end; }

.side { width: 156.500px; height: 451.500px; margin-top: 12px; background: #000; border-radius: 15px; }
.month { font: 700 11px Roboto, sans-serif; fill: #d8d8d8; }
.months { display: grid; grid-template-columns: repeat(3, 39.500px); grid-auto-rows: 29.500px; gap: 2.500px .8px; margin-left: 21px; }
.months span { display: flex; align-items: center; justify-content: center; border: 1px solid #444; color: #e6e6e6; font-size: 7.600px; font-weight: 600; }
.months .sel { background: #333; }
.alert { width: 135px; height: 240px; margin: 39.500px 0 0 11px; background: #262626; border-radius: 22px; }
.ahead { font: 19.500px Lato, sans-serif; fill: #f2f2f2; }
.amsg { font-size: 15.500px; font-weight: 500; fill: #d2d0ce; }

.filters { width: 33px; padding-top: 12px; border-left: 1px solid #979593; background: #fff; display: flex; flex-direction: column; align-items: center; }
.funnel { margin: 15px 0 0 3px; }
.vert { writing-mode: vertical-rl; font-weight: 600; font-size: 14px; line-height: 20px; }
.v1 { margin-top: 8px; }
.viz { width: 36px; border-left: 1px solid #d2d0ce; border-right: 1px solid #d2d0ce; padding: 12px 0 0; display: flex; flex-direction: column; align-items: center; }
.v2 { margin-top: 13.500px; letter-spacing: .4px; }
.data { width: 180px; }
.dhead { display: flex; justify-content: space-between; align-items: center; height: 38px; padding: 0 8px 0 8px; }
.dhead h2 { margin: 0; font-size: 15px; font-weight: 600; letter-spacing: -.2px; }
.dsearch { display: flex; align-items: center; gap: 7px; width: 172px; height: 27px; margin: 7px 0 9px 4px; padding-left: 7px; border: 1px solid #605e5c; border-radius: 2px; background: #fff; font-size: 12.500px; color: #484644; }
.dsearch span { margin-top: 1px; }
.drow { display: flex; align-items: center; height: 24px; padding-left: 9px; font-size: 12px; letter-spacing: -.35px; color: #3b3a39; }
.tw { margin-right: 6px; }
.drow span { margin-left: 5px; }

/* page tabs */
.tabs { display: flex; height: 35px; font-size: 11.800px; letter-spacing: -.2px; }
.tab { position: relative; display: flex; align-items: center; justify-content: center; width: 89px; border-right: 1px solid #c8c6c4; letter-spacing: -.35px; }
.tab.on { width: 82px; background: #fff; border-left: 1px solid #979593; border-bottom: 4px solid #117865; padding-top: 3px; letter-spacing: -.15px; }
.tab i { position: absolute; right: 4px; top: 2px; font-style: normal; font-size: 10.500px; font-weight: 600; }
.add { display: flex; align-items: center; justify-content: center; width: 39px; height: 32px; margin: 2px 0 0; background: #117865; }

/* status bar */
.status { display: flex; align-items: center; height: 24px; border-top: 1px solid #dcdad8; color: #484644; font-size: 11.800px; letter-spacing: -.1px; padding: 0 23px 0 0; }
.pg { padding-left: 5px; margin-bottom: 1px; }
.status > svg:first-of-type { margin-left: auto; }
.pct { margin: 0 20px 1px 16px; letter-spacing: -.3px; }

/* taskbar */
.taskbar { display: flex; align-items: center; height: 49px; background: #202021; border-top: 1px solid #000; color: #fff; }
.weather { display: flex; width: 330px; padding-left: 18px; gap: 7px; }
.weather div { display: flex; flex-direction: column; font-size: 11.200px; line-height: 16px; margin-top: -3px; }
.weather b { font-weight: 600; letter-spacing: -.3px; }
.weather span { color: #c4c4c4; }
.weather svg { margin-top: -1px; }
.slot { position: relative; display: flex; align-items: center; justify-content: center; width: 44px; height: 40px; flex: none; }
.win { margin-right: 1px; }
.slot i { position: absolute; left: 19px; bottom: 0; width: 6px; height: 3px; border-radius: 2px; background: #9a9a9a; }
.slot.active { width: 40px; margin: 0 2px; background: #2f2f30; border: 1px solid #3b3b3c; border-radius: 4px; box-shadow: 3px 0 0 -1px #333; }
.slot.active > svg { margin-right: 2px; }
.slot.active i { left: 11px; width: 16px; background: #4cc2ff; }
.cp { margin: -4px 0 0 4px; }
.p { font-size: 9px; fill: #fff; text-anchor: middle; }
.pill { display: flex; align-items: center; width: 220px; height: 32px; margin: 0 2px; padding-left: 11px; background: #3a3a3b; border: 1px solid #4c4c4d; border-radius: 16px; font-size: 12.500px; color: #d6d6d6; }
.pill span { margin-left: 9px; }
.art { margin-left: auto; margin-right: 4px; }
.tray { display: grid; grid-template-columns: repeat(3, 32px); justify-items: center; align-items: center; margin-left: 45px; }
.net { display: flex; align-items: center; gap: 7px; margin-left: 8px; }
.clock { display: flex; flex-direction: column; align-items: flex-end; width: 64px; margin-left: 9px; font-size: 11.800px; line-height: 16px; letter-spacing: -.15px; }
.badge { display: flex; align-items: center; justify-content: center; width: 15px; height: 15px; margin-left: 7px; border-radius: 50%; background: #4cc2ff; color: #16374a; font-size: 9px; font-weight: 600; }
```
